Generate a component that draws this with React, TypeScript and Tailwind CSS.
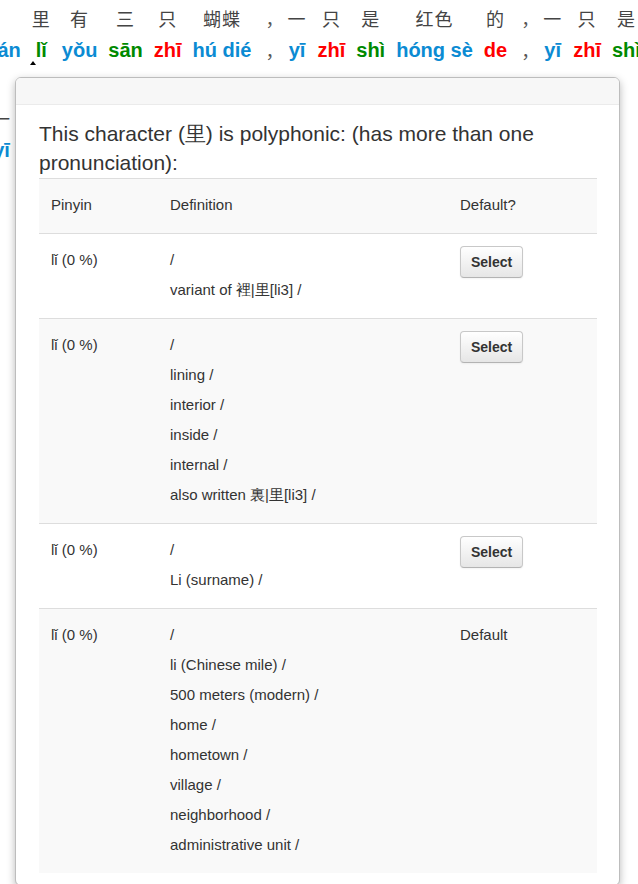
import React from "react";

type Word = { zh: string; py: string; color: string };

const BLUE = "text-[#0b8bd3]";
const GREEN = "text-[#008a00]";
const RED = "text-[#ff0000]";
const DARK = "text-[#555555]";

const line1: Word[] = [
    { zh: "花园", py: "huā yuán", color: BLUE },
    { zh: "里", py: "lǐ", color: GREEN },
    { zh: "有", py: "yǒu", color: BLUE },
    { zh: "三", py: "sān", color: GREEN },
    { zh: "只", py: "zhī", color: RED },
    { zh: "蝴蝶", py: "hú dié", color: BLUE },
    { zh: "，", py: "，", color: DARK },
    { zh: "一", py: "yī", color: BLUE },
    { zh: "只", py: "zhī", color: RED },
    { zh: "是", py: "shì", color: GREEN },
    { zh: "红色", py: "hóng sè", color: BLUE },
    { zh: "的", py: "de", color: RED },
    { zh: "，", py: "，", color: DARK },
    { zh: "一", py: "yī", color: BLUE },
    { zh: "只", py: "zhī", color: RED },
    { zh: "是", py: "shì", color: GREEN },
    { zh: "黄色", py: "huáng sè", color: BLUE },
];

const line2: Word[] = [
    { zh: "一", py: "yī", color: BLUE },
    { zh: "只", py: "zhī", color: RED },
    { zh: "是", py: "shì", color: GREEN },
    { zh: "白色", py: "bái sè", color: BLUE },
    { zh: "的", py: "de", color: RED },
];

const rows = [
    { pinyin: "lǐ (0 %)", defs: ["/", "variant of 裡|里[li3] /"], isDefault: false },
    { pinyin: "lǐ (0 %)", defs: ["/", "lining /", "interior /", "inside /", "internal /", "also written 裏|里[li3] /"], isDefault: false },
    { pinyin: "lǐ (0 %)", defs: ["/", "Li (surname) /"], isDefault: false },
    {
        pinyin: "lǐ (0 %)",
        defs: ["/", "li (Chinese mile) /", "500 meters (modern) /", "home /", "hometown /", "village /", "neighborhood /", "administrative unit /"],
        isDefault: true,
    },
];

const CJK = { fontFamily: '"Noto Sans CJK SC", sans-serif' };

function SentenceLine({ words, offset }: { words: Word[]; offset: string }) {
    return (
        <div className={`flex gap-[11px] h-[100px] whitespace-nowrap ${offset}`}>
            {words.map((w, i) => {
                const punct = w.py === "，";
                if (punct) {
                    return (
                        <div key={i} className="flex flex-col w-[14px] shrink-0 pl-[3px] text-[18px] text-[#555]" style={CJK}>
                            <span className="leading-[36px]">{w.zh}</span>
                            <span className="leading-[28px]">{w.py}</span>
                        </div>
                    );
                }
                return (
                    <div key={i} className="relative flex flex-col items-center shrink-0">
                        <span className="text-[18px] leading-[36px] text-[#444] tracking-[1px]" style={CJK}>
                            {w.zh}
                        </span>
                        <span className={`text-[20px] leading-[28px] font-bold ${w.color}`}>{w.py}</span>
                        {w.py === "lǐ" && i === 1 && (
                            <span className="absolute top-[61px] left-[-2px] w-0 h-0 border-x-[3px] border-x-transparent border-b-[4px] border-b-black" />
                        )}
                    </div>
                );
            })}
        </div>
    );
}

function SelectButton() {
    return (
        <button className="h-[32px] px-[10px] rounded-[4px] border border-[#c8c8c8] border-b-[#b3b3b3] bg-gradient-to-b from-white to-[#e6e6e6] text-[14px] font-bold text-[#333] shadow-[inset_0_1px_0_rgba(255,255,255,0.2),0_1px_2px_rgba(0,0,0,0.05)]">
            Select
        </button>
    );
}

export default function App() {
    return (
        <div className="relative h-[884px] w-[638px] overflow-hidden bg-white" style={{ fontFamily: '"Liberation Sans", Arial, sans-serif' }}>
            <div className="flex flex-col overflow-hidden">
                <SentenceLine words={line1} offset="ml-[-67px]" />
                <SentenceLine words={line2} offset="ml-[-8px]" />
            </div>

            <div className="absolute left-[15px] top-[77px] w-[605px] bg-white border border-[#bdbdbd] rounded-[6px] shadow-[0_3px_8px_rgba(0,0,0,0.28)] overflow-hidden">
                <div className="h-[27px] bg-[#f7f7f7] border-b border-[#ebebeb]" />
                <div className="pt-[14px] pl-[23px] pr-[22px] pb-[12px]">
                    <h3 className="text-[21px] leading-[29px] text-[#333] mb-[1px]">
                        This character (里) is polyphonic: (has more than one pronunciation):
                    </h3>
                    <div className="text-[15px] text-[#333] border-t border-[#dddddd]">
                        <div className="grid grid-cols-[119px_290px_1fr] bg-[#f9f9f9] border-b border-[#dddddd]">
                            <div className="pl-3 pt-4 pb-[18px] leading-[20px]">Pinyin</div>
                            <div className="pl-3 pt-4 pb-[18px] leading-[20px]">Definition</div>
                            <div className="pl-3 pt-4 pb-[18px] leading-[20px]">Default?</div>
                        </div>
                        {rows.map((row, i) => (
                            <div
                                key={i}
                                className={`grid grid-cols-[119px_290px_1fr] ${i % 2 === 1 ? "bg-[#f9f9f9]" : "bg-white"} ${i < rows.length - 1 ? "border-b border-[#dddddd]" : ""}`}
                            >
                                <div className="pl-3 pt-4 leading-[20px]">{row.pinyin}</div>
                                <div className="pl-3 pt-4 pb-[18px] flex flex-col gap-[10px] leading-[20px]">
                                    {row.defs.map((d, j) => (
                                        <div key={j}>{d}</div>
                                    ))}
                                </div>
                                <div className="pl-3 pt-3 leading-[20px]">
                                    {row.isDefault ? <div className="pt-1">Default</div> : <SelectButton />}
                                </div>
                            </div>
                        ))}
                    </div>
                </div>
            </div>
        </div>
    );
}
